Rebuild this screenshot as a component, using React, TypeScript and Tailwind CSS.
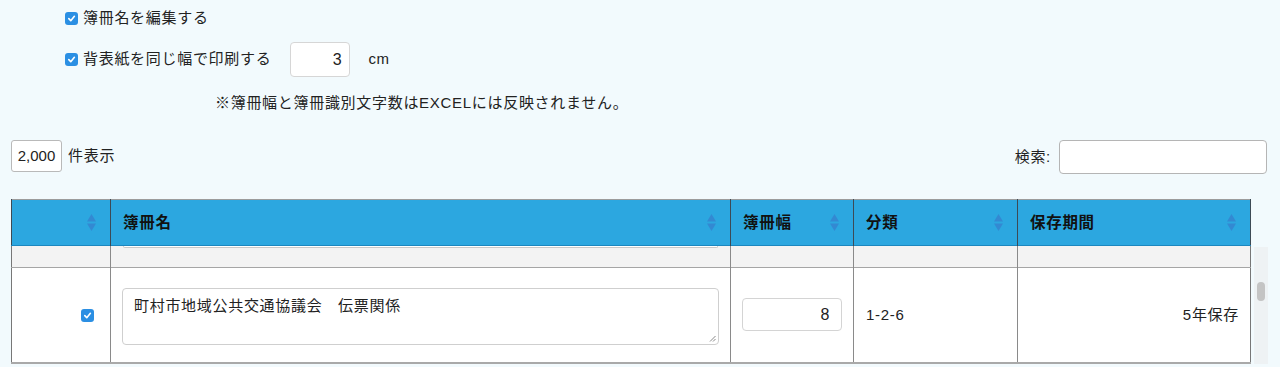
import React from 'react';

const FONT = "font-['Liberation_Sans','Noto_Sans_CJK_JP',sans-serif]";

const Check = () => (
    <span className="inline-flex w-[13px] h-[13px] rounded-[3px] bg-[#2b8fe3] items-center justify-center shrink-0">
        <svg width="9" height="9" viewBox="0 0 10 10">
            <path d="M2 5.2 L4.2 7.4 L8.2 2.6" fill="none" stroke="#fff" strokeWidth="1.8" strokeLinecap="round" strokeLinejoin="round" />
        </svg>
    </span>
);

const SortIcon = () => (
    <svg width="11" height="19" viewBox="0 0 11 19" className="shrink-0">
        <path d="M5.5 1 L10 8.5 L1 8.5 Z" fill="#3389d2" />
        <path d="M5.5 18 L10 10.5 L1 10.5 Z" fill="#3389d2" />
    </svg>
);

const HeadCell = ({ label, last }: { label?: string; last?: boolean }) => (
    <th className={`h-[46px] p-0 bg-[#2ca7e0] ${last ? '' : 'border-r border-[#3d4a55]'} font-normal`}>
        <div className="flex items-center justify-between pl-[12px] pr-[13px]">
            <span className="text-[15.5px] font-bold text-[#111] tracking-[0.7px]">{label}</span>
            <SortIcon />
        </div>
    </th>
);

export default function App() {
    return (
        <div className={`min-h-[367px] bg-[#f2fafd] text-[15px] tracking-[0.7px] text-[#222] ${FONT}`}>
            {/* options */}
            <div className="pl-[65px] pt-[9px]">
                <label className="flex items-center gap-[5px] h-[18px]">
                    <Check />
                    <span>簿冊名を編集する</span>
                </label>
                <div className="flex items-center h-[35px] mt-[15px]">
                    <Check />
                    <span className="ml-[5px]">背表紙を同じ幅で印刷する</span>
                    <div className="ml-[19px] w-[60px] h-[35px] bg-white border border-[#d6d6d6] rounded-[4px] flex items-center justify-end pr-[7px] text-[16px]">3</div>
                    <span className="ml-[18px] text-[15px]">cm</span>
                </div>
                <p className="mt-[17px] h-[18px] leading-[18px] pl-[150px]">※簿冊幅と簿冊識別文字数はEXCELには反映されません。</p>
            </div>

            {/* length + search */}
            <div className="mt-[28px] px-[11px] pr-[13px] flex items-center justify-between h-[34px]">
                <div className="flex items-start h-[34px]">
                    <div className="w-[51px] h-[32px] bg-white border border-[#b9b9b9] rounded-[3px] flex items-center justify-center tracking-normal">2,000</div>
                    <span className="ml-[6px] mt-[5px]">件表示</span>
                </div>
                <div className="flex items-center">
                    <span>検索:</span>
                    <div className="ml-[8px] w-[208px] h-[34px] bg-white border border-[#b5b5b5] rounded-[4px]" />
                </div>
            </div>

            {/* table */}
            <div className="mt-[25px] flex">
                <table className="ml-[11px] w-[1239px] table-fixed border-collapse border-t border-[#9c9c9c]">
                    <colgroup>
                        <col className="w-[99px]" />
                        <col className="w-[620px]" />
                        <col className="w-[123px]" />
                        <col className="w-[164px]" />
                        <col className="w-[233px]" />
                    </colgroup>
                    <thead>
                        <tr className="border-x border-[#3d4a55] border-b border-b-[#1c87bf]">
                            <HeadCell />
                            <HeadCell label="簿冊名" />
                            <HeadCell label="簿冊幅" />
                            <HeadCell label="分類" />
                            <HeadCell label="保存期間" last />
                        </tr>
                    </thead>
                    <tbody>
                        <tr className="h-[22px] bg-[#f3f3f3] border-x border-[#777] border-b border-b-[#a5a5a5]">
                            <td className="p-0 border-r border-[#8a8a8a]" />
                            <td className="p-0 border-r border-[#8a8a8a] align-top">
                                <div className="mx-[12px] h-[2px] border-b border-x border-[#c9c9c9] rounded-b-[4px] bg-white" />
                            </td>
                            <td className="p-0 border-r border-[#8a8a8a]" />
                            <td className="p-0 border-r border-[#8a8a8a]" />
                            <td className="p-0" />
                        </tr>
                        <tr className="h-[95px] bg-white border-x border-[#777] border-b-2 border-b-[#a9a9a9]">
                            <td className="p-0 border-r border-[#8a8a8a]">
                                <div className="flex justify-end pr-[16px] pt-[2px]">
                                    <Check />
                                </div>
                            </td>
                            <td className="p-0 border-r border-[#8a8a8a]">
                                <div className="relative mx-[11px] mt-[3px] h-[57px] bg-white border border-[#cfcfcf] rounded-[4px] px-[11px] pt-[6px]">
                                    町村市地域公共交通協議会　伝票関係
                                    <svg width="7" height="7" viewBox="0 0 7 7" className="absolute right-[2px] bottom-[2px]">
                                        <path d="M6.5 1 L1 6.5 M6.5 4 L4 6.5" stroke="#888" strokeWidth="1" />
                                    </svg>
                                </div>
                            </td>
                            <td className="p-0 border-r border-[#8a8a8a]">
                                <div className="mx-[11px] h-[33px] bg-white border border-[#d4d4d4] rounded-[4px] flex items-center justify-end pr-[11px] text-[16px]">8</div>
                            </td>
                            <td className="p-0 border-r border-[#8a8a8a] pl-[12px]">1-2-6</td>
                            <td className="p-0 pr-[11px] text-right">5年保存</td>
                        </tr>
                    </tbody>
                </table>
                {/* scrollbar strip */}
                <div className="ml-[3px] mt-[48px] w-[14px] bg-[#eef2f4] flex justify-center">
                    <div className="mt-[35px] w-[8px] h-[19px] rounded-full bg-[#c4c4c4]" />
                </div>
            </div>
        </div>
    );
}
